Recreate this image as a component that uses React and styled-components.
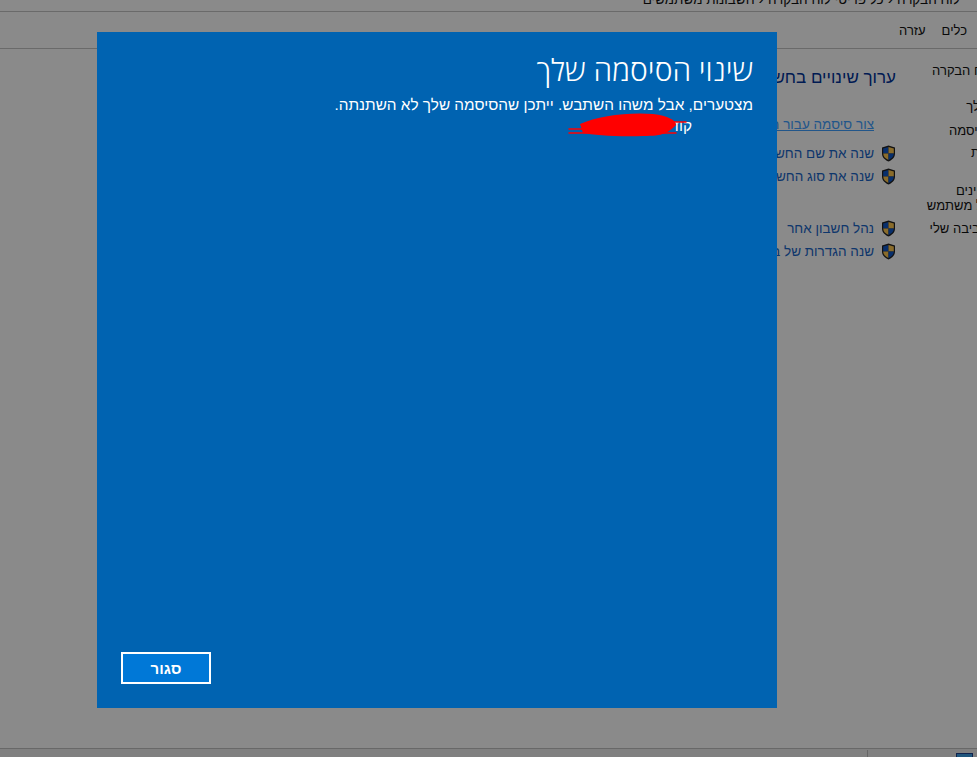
import React from "react";
import styled, { createGlobalStyle } from "styled-components";

const Global = createGlobalStyle`
  html, body { margin: 0; padding: 0; height: 100%; overflow: hidden; background: #8a8a8a; }
  #root { height: 100%; }
`;

const Viewport = styled.div`
  position: relative;
  width: 977px;
  height: 757px;
  overflow: hidden;
  font-family: "Liberation Sans", "DejaVu Sans", sans-serif;
`;

/* the control-panel window runs past the right edge of the picture */
const ControlPanel = styled.div`
  width: 1089px;
  height: 757px;
  display: flex;
  flex-direction: column;
  background: #fff;
  color: #000;
  direction: rtl;
`;

const AddressBar = styled.div`
  height: 11px;
  flex: none;
  display: flex;
  align-items: flex-end;
  overflow: hidden;
  border-bottom: 1px solid #c4c4c4;
  padding-right: 129px;
  font-size: 13.5px;
  line-height: 16px;
  white-space: nowrap;
  color: #111;
`;

const Crumbs = styled.span`
  margin-bottom: 3px;
`;

const CrumbSeparator = styled.span`
  margin: 0 4px;
  font-size: 16px;
  line-height: 16px;
`;

const MenuBar = styled.div`
  height: 36px;
  flex: none;
  display: flex;
  align-items: center;
  gap: 16px;
  padding-right: 122px;
  border-bottom: 1px solid #c4c4c4;
  font-size: 13px;
`;

const MenuItem = styled.span`
  color: #111;
`;

const Body = styled.div`
  flex: 1;
  display: flex;
  min-height: 0;
`;

const Sidebar = styled.div`
  width: 193px;
  flex: none;
  padding-top: 14px;
  display: flex;
  flex-direction: column;
  font-size: 13px;
  color: #111;
`;

const SideLink = styled.div`
  line-height: 15px;
  margin-top: ${(p) => p.$top}px;
  padding-right: ${(p) => p.$shift || 0}px;
  white-space: nowrap;
`;

const Content = styled.div`
  flex: 1;
  padding-top: 18px;
`;

const Heading = styled.h1`
  margin: 0 0 27px;
  font-size: 17px;
  line-height: 22px;
  font-weight: 400;
  color: #003399;
  white-space: nowrap;
`;

const TaskGroup = styled.div`
  display: flex;
  flex-direction: column;
  gap: 7px;
  margin-bottom: ${(p) => p.$gap || 0}px;
`;

const Task = styled.a`
  display: flex;
  align-items: center;
  height: 16px;
  font-size: 13.5px;
  white-space: nowrap;
  color: ${(p) => (p.$hover ? "#3f9fff" : "#1a66c8")};
  text-decoration: ${(p) => (p.$hover ? "underline" : "none")};
  padding-right: ${(p) => (p.$plain ? 22 : 0)}px;
  margin-bottom: ${(p) => (p.$plain ? 6 : 0)}px;
`;

const ShieldIcon = styled.svg`
  width: 15px;
  height: 17px;
  flex: none;
  margin-left: 7px;
`;

const StatusBar = styled.div`
  height: 8px;
  flex: none;
  display: flex;
  border-top: 1px solid #c0c0c0;
  background: #ececec;
  padding-right: 112px;
`;

const StatusCell = styled.div`
  width: ${(p) => p.$w}px;
  flex: none;
  margin-top: 1px;
  border-left: 1px solid #bdbdbd;
`;

const StatusTile = styled.svg`
  width: 17px;
  height: 7px;
  margin-top: 4px;
  margin-right: 4px;
  flex: none;
`;

const Scrim = styled.div`
  position: absolute;
  inset: 0;
  background: rgba(0, 0, 0, 0.46);
`;

const Dialog = styled.div`
  position: absolute;
  left: 97px;
  top: 32px;
  width: 680px;
  height: 676px;
  box-sizing: border-box;
  padding: 20px 24px 24px;
  display: flex;
  flex-direction: column;
  background: #0063b1;
  color: #fff;
  direction: rtl;
`;

const Title = styled.h2`
  margin: 0 0 6px;
  font-family: "Open Sans", "Liberation Sans", sans-serif;
  font-size: 30px;
  line-height: 36px;
  font-weight: 300;
`;

const Message = styled.div`
  position: relative;
  flex: 1;
  font-size: 15.35px;
  line-height: 21px;
`;

const MessageLine = styled.div`
  padding-right: ${(p) => p.$indent || 0}px;
`;

const Redaction = styled.svg`
  position: absolute;
  left: 447px;
  top: 19px;
  width: 120px;
  height: 24px;
  overflow: visible;
`;

const Actions = styled.div`
  display: flex;
  justify-content: flex-end;
`;

const CloseButton = styled.button`
  width: 90px;
  height: 32px;
  box-sizing: border-box;
  border: 2px solid #fff;
  background: #0078d7;
  color: #fff;
  font-family: "Liberation Sans", sans-serif;
  font-size: 15px;
  font-weight: 700;
  padding: 0;
`;

const Shield = () => (
  <ShieldIcon viewBox="0 0 15 17">
    <path d="M7.5.5 L14 2.5 V8.5 C14 12.5 11 15 7.5 16.5 C4 15 1 12.5 1 8.5 V2.5 Z" fill="#222" />
    <path d="M7.5 2 V8.5 H2.2 V3.4 Z" fill="#1058c8" />
    <path d="M7.5 2 L12.8 3.4 V8.5 H7.5 Z" fill="#ffc850" />
    <path d="M2.2 8.5 H7.5 V15 C4.5 13.6 2.2 11.6 2.2 8.5 Z" fill="#ffc850" />
    <path d="M7.5 8.5 H12.8 C12.8 11.6 10.5 13.6 7.5 15 Z" fill="#1058c8" />
  </ShieldIcon>
);

export default function App() {
  return (
    <Viewport>
      <Global />
      <ControlPanel>
        <AddressBar>
          <Crumbs>
            לוח הבקרה<CrumbSeparator>‹</CrumbSeparator>כל פריטי לוח הבקרה<CrumbSeparator>‹</CrumbSeparator>חשבונות משתמשים
          </Crumbs>
        </AddressBar>
        <MenuBar>
          <MenuItem>כלים</MenuItem>
          <MenuItem>עזרה</MenuItem>
        </MenuBar>
        <Body>
          <Sidebar>
            <SideLink $top={0} $shift={26}>דף הבית של לוח הבקרה</SideLink>
            <SideLink $top={21}>נהל את האישורים שלך</SideLink>
            <SideLink $top={9} $shift={10}>צור דיסק לאיפוס סיסמה</SideLink>
            <SideLink $top={7} $shift={8}>קישור זהויות מקוונות</SideLink>
            <SideLink $top={23}>קבע תצורה של מאפיינים</SideLink>
            <SideLink $top={0}>מתקדמים של פרופיל משתמש</SideLink>
            <SideLink $top={8} $shift={6}>שנה את משתני הסביבה שלי</SideLink>
          </Sidebar>
          <Content>
            <Heading>ערוך שינויים בחשבון המשתמש שלך</Heading>
            <TaskGroup $gap={36}>
              <Task $hover $plain>צור סיסמה עבור החשבון שלך</Task>
              <Task><Shield />שנה את שם החשבון שלך</Task>
              <Task><Shield />שנה את סוג החשבון שלך</Task>
            </TaskGroup>
            <TaskGroup>
              <Task><Shield />נהל חשבון אחר</Task>
              <Task><Shield />שנה הגדרות של בקרת חשבון משתמש</Task>
            </TaskGroup>
          </Content>
        </Body>
        <StatusBar>
          <StatusTile viewBox="0 0 17 7">
            <rect x="0.5" y="0.5" width="16" height="7" fill="#3aa0e8" stroke="#1c3f8f" />
          </StatusTile>
          <StatusCell $w={88} />
        </StatusBar>
      </ControlPanel>
      <Scrim />
      <Dialog>
        <Title>שינוי הסיסמה שלך</Title>
        <Message>
          <MessageLine>מצטערים, אבל משהו השתבש. ייתכן שהסיסמה שלך לא השתנתה.</MessageLine>
          <MessageLine $indent={61}>קוד</MessageLine>
          <Redaction viewBox="0 0 120 24">
            <path
              d="M12 11 C30 3 60 -1 85 1 C100 3 108 7 108 12 C100 20 96 23 75 23 C50 24 25 22 15 20 Z"
              fill="#ff0000"
            />
            <path
              d="M1 16 H34 M1 20 H34 M95 9 H118 M92 20 H108"
              fill="none"
              stroke="#ff0000"
              strokeWidth="1.5"
              strokeLinecap="round"
            />
          </Redaction>
        </Message>
        <Actions>
          <CloseButton>סגור</CloseButton>
        </Actions>
      </Dialog>
    </Viewport>
  );
}
